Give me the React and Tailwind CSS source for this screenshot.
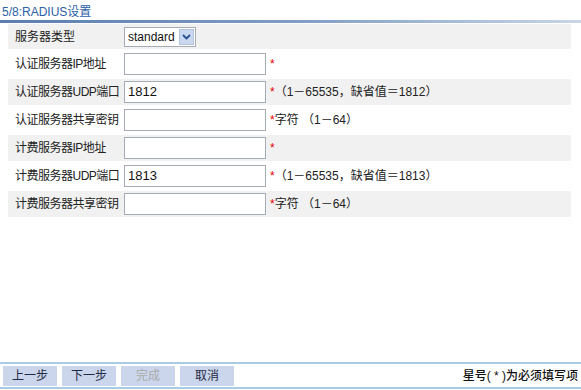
const font = { fontFamily: '"Liberation Sans", "Noto Sans CJK SC", sans-serif' }

const rows = [
  { label: '认证服务器IP地址', value: '', hint: '' },
  { label: '认证服务器UDP端口', value: '1812', hint: '（1－65535，缺省值＝1812）' },
  { label: '认证服务器共享密钥', value: '', hint: '字符 （1－64）' },
  { label: '计费服务器IP地址', value: '', hint: '' },
  { label: '计费服务器UDP端口', value: '1813', hint: '（1－65535，缺省值＝1813）' },
  { label: '计费服务器共享密钥', value: '', hint: '字符 （1－64）' },
]

function Row({ label, value, hint, gray }) {
  return (
    <div className={`flex items-center h-[26px] whitespace-nowrap ${gray ? 'bg-[#f1f1f1]' : 'bg-white'}`}>
      <div className="w-[116px] shrink-0 pl-[7px] text-[12px] tracking-[-0.5px] text-[#222]">{label}</div>
      <div className="w-[142px] shrink-0 h-[22px] border border-[#a5acb5] bg-white flex items-center pl-[3px] text-[13px] text-[#111]">
        {value}
      </div>
      <span className="ml-[4px] text-[12px] text-[#e00] leading-none">*</span>
      <span className="text-[12px] text-[#222]">{hint}</span>
    </div>
  )
}

export default function App() {
  return (
    <div className="w-[581px] h-[390px] bg-white flex flex-col" style={font}>
      <div className="px-[2px] pt-[3px] h-[20px] text-[12px] text-[#2b5ea8]">5/8:RADIUS设置</div>
      <div className="h-[3px] bg-gradient-to-r from-[#5a7fae] via-[#7f9cc3] to-[#c8d6e6]" />
      <div className="flex-1 px-[8px] pr-[10px] pt-[1px]">
        <div className="flex flex-col gap-[2px]">
          <div className="flex items-center h-[25px] bg-[#f1f1f1]">
            <div className="w-[116px] shrink-0 pl-[7px] text-[12px] text-[#222]">服务器类型</div>
            <div className="w-[72px] h-[20px] border border-[#a5acb5] bg-white flex items-center justify-between pl-[3px] pr-[1px] text-[12px] text-[#111]">
              <span>standard</span>
              <span className="w-[15px] h-[16px] bg-[#c9d8f0] border border-[#b3c4e0] flex items-center justify-center">
                <svg width="9" height="6" viewBox="0 0 9 6">
                  <path d="M1 1 L4.5 4.5 L8 1" fill="none" stroke="#2a4f8f" strokeWidth="1.8" />
                </svg>
              </span>
            </div>
          </div>
          {rows.map((r, i) => (
            <Row key={r.label} {...r} gray={i % 2 === 1} />
          ))}
        </div>
      </div>
      <div className="h-[2px] bg-[#a9cbe4] mb-[2px]" />
      <div className="flex items-center justify-between px-[3px] h-[20px]">
        <div className="flex gap-[5px]">
          {['上一步', '下一步', '完成', '取消'].map(b => (
            <div
              key={b}
              className={`w-[54px] h-[20px] bg-[#cbd6ec] flex items-center justify-center text-[12px] ${b === '完成' ? 'text-[#a9a9a9]' : 'text-[#1f2a44]'}`}
            >
              {b}
            </div>
          ))}
        </div>
        <div className="text-[12px] text-[#111] font-medium whitespace-pre">星号( * )为必须填写项</div>
      </div>
      <div className="h-[2px] bg-[#a9cbe4] mt-[1px] mb-[1px]" />
    </div>
  )
}
